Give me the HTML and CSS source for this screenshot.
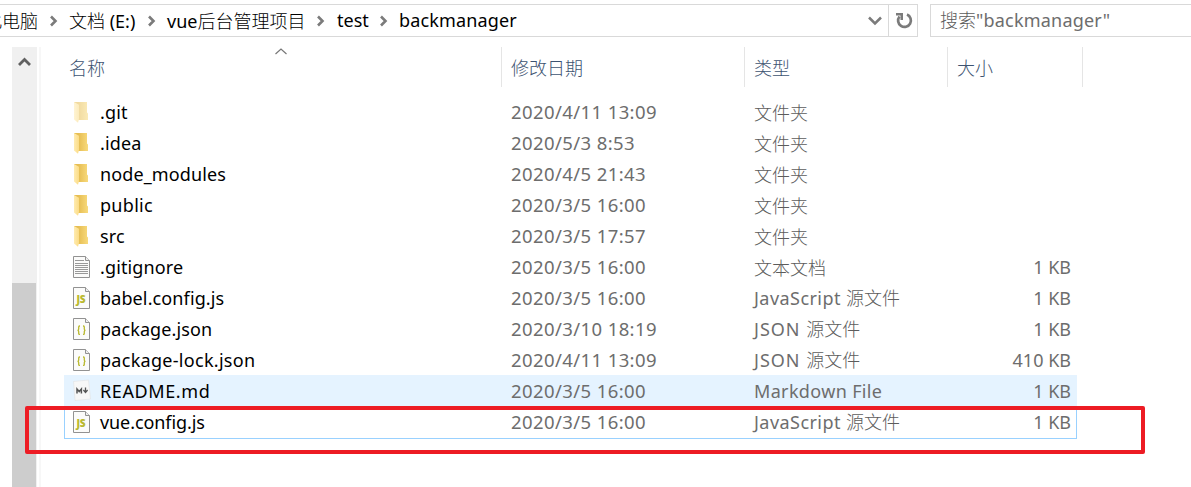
FILE: index.html
```html
<!DOCTYPE html>
<html lang="zh-CN">
<head>
<meta charset="utf-8">
<title>backmanager</title>
<link rel="stylesheet" href="styles.css">
</head>
<body>
<svg class="defs" width="0" height="0">
  <defs>
    <linearGradient id="back" x1="0" x2="1"><stop offset="0.300" stop-color="#e6bd52"/><stop offset="1" stop-color="#f8da7c"/></linearGradient>
    <linearGradient id="flap" x1="0" x2="1"><stop offset="0" stop-color="#ffebb0"/><stop offset="1" stop-color="#fbdc86"/></linearGradient>
    <symbol id="folder" viewBox="0 0 18 24"><path fill="url(#back)" d="M1 2h13v10.500l1 1V20H5L1 18z"/><path fill="url(#flap)" d="M1 2l5 2.800V19l-1 3.800L1 19.500z"/></symbol>
    <symbol id="page" viewBox="0 0 18 24"><path fill="#fbfbfa" stroke="#929292" d="M.5 1.500h12l4 4v17H.5z"/><path fill="#eee" stroke="#929292" d="M12.500 1.500v4h4"/></symbol>
    <symbol id="text" viewBox="0 0 18 24"><use href="#page"/><path stroke="#999" d="M2 5.500h9M2 8.500h13M2 10.500h13M2 12.500h13M2 14.500h13M2 16.500h13M2 18.500h13"/></symbol>
    <symbol id="js" viewBox="0 0 18 24"><use href="#page"/><text class="js-mark" x="3.500" y="17">JS</text></symbol>
    <symbol id="json" viewBox="0 0 18 24"><use href="#page"/><path fill="none" stroke="#b9b92f" stroke-width="1.300" d="M7 9H6.500q-.8 0-.8.900v2.200q0 1.200-1.200 1.200 1.200 0 1.200 1.200v2q0 .9.800.9H7M10 9h.5q.8 0 .8.900v2.200q0 1.200 1.200 1.200-1.200 0-1.200 1.200v2q0 .9-.8.900H10"/></symbol>
    <symbol id="md" viewBox="0 0 18 24"><path fill="#f7f7f7" stroke="#e2e2e2" stroke-width=".6" d="M.5 2.500L15.500 1 17.500 20 2 21.500z"/><path fill="none" stroke="#555" stroke-width="1.500" d="M4 14.500V10l2.200 2.500L8.400 10v4.500"/><path fill="none" stroke="#555" stroke-width="1.300" d="M12.500 8.500v4.800M10.400 11l2.100 2.400 2.100-2.400"/></symbol>
    <symbol id="chev" viewBox="0 0 8 12"><path fill="none" stroke="#7b7b7b" stroke-width="2.600" d="M1 1.500L5.500 6 1 10.500"/></symbol>
  </defs>
</svg>
<div class="window">
  <header class="bar">
    <nav class="address">
      <span class="crumb c-pc">此电脑</span><svg class="chev"><use href="#chev"/></svg>
      <span class="crumb c-drive">文档<span class="latin"> (E:)</span></span><svg class="chev"><use href="#chev"/></svg>
      <span class="crumb c-vue"><span class="latin">vue</span>后台管理项目</span><svg class="chev"><use href="#chev"/></svg>
      <span class="crumb c-test latin">test</span><svg class="chev"><use href="#chev"/></svg>
      <span class="crumb c-last latin">backmanager</span>
      <svg class="drop" width="14" height="10" viewBox="0 0 14 10"><path fill="none" stroke="#7b7b7b" stroke-width="2.500" d="M1 1.500l6 6 6-6"/></svg>
    </nav>
    <div class="refresh"><svg width="18" height="18" viewBox="0 0 18 18"><path fill="none" stroke="#7b7b7b" stroke-width="2.700" d="M4.500 4.500A6.400 6.400 0 1 0 12 2.600"/><path fill="#7b7b7b" d="M1 1h7v7H5.500V3.500H1z"/></svg></div>
    <div class="search">搜索<span class="latin">"backmanager"</span></div>
  </header>
  <main class="body">
    <div class="scroll"><svg width="13" height="10" viewBox="0 0 13 10"><path fill="none" stroke="#606060" stroke-width="2.800" d="M1 8l5.500-5.500L12 8"/></svg><div class="thumb"></div></div>
    <section class="list">
      <div class="head">
        <div class="h-name">名称<svg class="sort" width="12" height="7" viewBox="0 0 12 7"><path fill="none" stroke="#777" stroke-width="1.200" d="M.5 6l5.500-5 5.500 5"/></svg></div>
        <div>修改日期</div><div>类型</div><div>大小</div>
      </div>
      <div class="rows">
        <div class="row"><svg class="icon faded"><use href="#folder"/></svg><span class="name">.git</span><span class="date">2020/4/11 13:09</span><span class="type">文件夹</span><span class="size"></span></div>
        <div class="row"><svg class="icon"><use href="#folder"/></svg><span class="name">.idea</span><span class="date">2020/5/3 8:53</span><span class="type">文件夹</span><span class="size"></span></div>
        <div class="row"><svg class="icon"><use href="#folder"/></svg><span class="name">node_modules</span><span class="date">2020/4/5 21:43</span><span class="type">文件夹</span><span class="size"></span></div>
        <div class="row"><svg class="icon"><use href="#folder"/></svg><span class="name loose">public</span><span class="date">2020/3/5 16:00</span><span class="type">文件夹</span><span class="size"></span></div>
        <div class="row"><svg class="icon"><use href="#folder"/></svg><span class="name">src</span><span class="date">2020/3/5 17:57</span><span class="type">文件夹</span><span class="size"></span></div>
        <div class="row"><svg class="icon"><use href="#text"/></svg><span class="name">.gitignore</span><span class="date">2020/3/5 16:00</span><span class="type">文本文档</span><span class="size">1 KB</span></div>
        <div class="row"><svg class="icon"><use href="#js"/></svg><span class="name">babel.config.js</span><span class="date">2020/3/5 16:00</span><span class="type"><span class="latin">JavaScript </span>源文件</span><span class="size">1 KB</span></div>
        <div class="row"><svg class="icon"><use href="#json"/></svg><span class="name">package.json</span><span class="date">2020/3/10 18:19</span><span class="type"><span class="latin wide">JSON </span>源文件</span><span class="size">1 KB</span></div>
        <div class="row"><svg class="icon"><use href="#json"/></svg><span class="name loose">package-lock.json</span><span class="date">2020/4/11 13:09</span><span class="type"><span class="latin wide">JSON </span>源文件</span><span class="size">410 KB</span></div>
        <div class="row hover"><svg class="icon"><use href="#md"/></svg><span class="name caps">README.md</span><span class="date">2020/3/5 16:00</span><span class="type latin">Markdown File</span><span class="size">1 KB</span></div>
        <div class="row focus"><svg class="icon"><use href="#js"/></svg><span class="name tight">vue.config.js</span><span class="date">2020/3/5 16:00</span><span class="type"><span class="latin">JavaScript </span>源文件</span><span class="size">1 KB</span></div>
      </div>
    </section>
  </main>
  <div class="mark"></div>
</div>
</body>
</html>
```

FILE: styles.css
```css
* { box-sizing: border-box; }
body { margin: 0; background: #fff; font: 18px/30px "Noto Sans CJK SC", sans-serif; font-weight: 300; color: #000; }
.defs { position: absolute; }
.window { position: relative; width: 1191px; height: 487px; overflow: hidden; }
.latin, .name, .date, .size { font-family: "Noto Sans", sans-serif; font-weight: 400; font-size: 18px; white-space: pre; }
.bar { display: flex; height: 47px; padding-top: 4px; }
.address { display: flex; align-items: center; width: 889px; height: 33px; padding-bottom: 1px; border: solid #d9d9d9; border-width: 1px 1px 1px 0; overflow: hidden; }
.crumb { flex: none; white-space: nowrap; }
.c-pc { width: 66px; margin-left: -16px; }
.c-drive { width: 79px; }
.c-vue { width: 150px; }
.c-test { width: 44px; }
.c-last { letter-spacing: .15px; }
.chev { flex: none; width: 8px; height: 12px; margin-right: 11px; }
.address > .chev { margin-top: 2px; }
.address > .c-vue + .chev { margin-right: 12px; }
.c-test + .chev { margin-left: -1px; }
.drop { margin: 2px 6px 0 auto; }
.refresh { display: flex; align-items: center; justify-content: center; width: 29px; height: 33px; padding-left: 1px; border: solid #d9d9d9; border-width: 1px 1px 1px 0; }
.search { flex: 1; height: 33px; margin-left: 12px; padding-left: 9px; border: 1px solid #d9d9d9; border-right: 0; color: #5c5c5c; line-height: 29px; }
.search .latin { color: #6d6d6d; letter-spacing: .2px; }
.body { display: flex; height: 440px; }
.scroll { display: flex; flex-direction: column; align-items: center; width: 25px; margin-left: 12px; padding-top: 10px; background: #f0f0f0; }
.thumb { align-self: flex-start; width: 24px; height: 204px; margin-top: auto; background: #cdcdcd; }
.list { width: 1050px; margin-left: 2px; border-left: 2px solid #f7f7f7; }
.head { display: grid; grid-template-columns: 461px 243px 203px 135px; height: 40px; line-height: 40px; color: #3d5371; }
.head > div { padding-left: 9px; border-right: 1px solid #e5e5e5; }
.head .h-name { position: relative; padding-left: 28px; }
.sort { position: absolute; left: 234px; top: 1px; }
.rows { margin: 9px 0 0 23px; }
.row { display: grid; grid-template-columns: 36px 411px 243px 202px 115px; align-items: center; width: 1013px; height: 31px; }
.row .icon { align-self: start; width: 18px; height: 24px; margin: 4px 0 0 9px; }
.faded { opacity: .55; }
.name { letter-spacing: .12px; }
.loose { letter-spacing: .29px; }
.caps { letter-spacing: .6px; }
.tight { letter-spacing: -.08px; }
.date, .type, .size, .type .latin { color: #6d6d6d; }
.type { color: #5c5c5c; }
.date { font-size: 18.500px; letter-spacing: .4px; }
.size { text-align: right; }
.type .latin { letter-spacing: .45px; }
.type .wide { letter-spacing: 1px; }
.type.latin { letter-spacing: .35px; color: #6d6d6d; }
.hover { background: #e5f3ff; }
.focus { height: 33px; padding-bottom: 2px; box-shadow: inset 0 0 0 1px #99d1ff; }
.js-mark { font: 800 10px "Open Sans", sans-serif; letter-spacing: -.3px; fill: #b9b92f; }
.mark { position: absolute; left: 25px; top: 406px; width: 1120px; height: 48px; border: 4px solid #ed1c24; border-radius: 2px; }
```
